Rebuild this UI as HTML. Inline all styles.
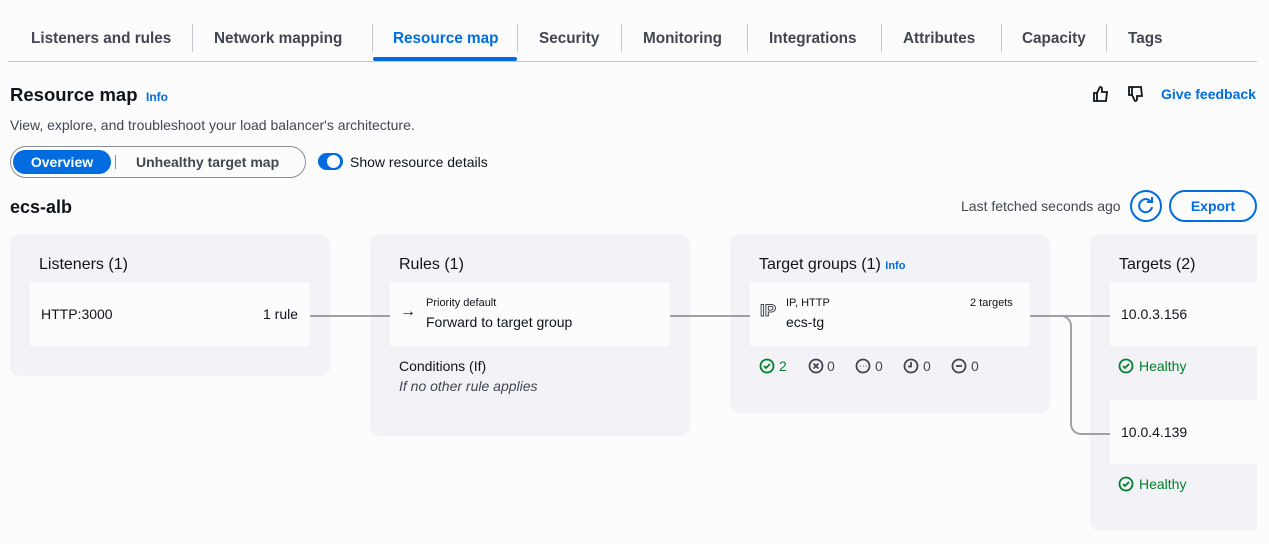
<!DOCTYPE html><html><head><style>
*{margin:0;padding:0;box-sizing:border-box}
body{width:1269px;height:544px;background:#fcfcfd;font-family:"Liberation Sans",sans-serif;color:#0f141a;position:relative;overflow:hidden;font-size:14px}
.a{position:absolute;white-space:nowrap}
.tab{position:absolute;top:30px;font-size:15.3px;font-weight:bold;color:#424650}
.sep{position:absolute;top:24px;width:1px;height:28px;background:#c6c6cd}
.card{position:absolute;background:#f3f3f7;border-radius:10px}
.in{position:absolute;background:#fcfcfd}
.h{font-size:16px}
.blue{color:#006ce0}
.ln{position:absolute;background:#a0a0a8;height:2px}
.g{color:#00802f}
</style></head><body>
<div class="tab" style="left:31px">Listeners and rules</div>
<div class="sep" style="left:192px"></div>
<div class="tab" style="left:214px">Network mapping</div>
<div class="sep" style="left:372px"></div>
<div class="tab" style="left:393px;color:#006ce0">Resource map</div>
<div class="sep" style="left:517px"></div>
<div class="tab" style="left:539px">Security</div>
<div class="sep" style="left:621px"></div>
<div class="tab" style="left:643px">Monitoring</div>
<div class="sep" style="left:747px"></div>
<div class="tab" style="left:769px">Integrations</div>
<div class="sep" style="left:881px"></div>
<div class="tab" style="left:903px">Attributes</div>
<div class="sep" style="left:1001px"></div>
<div class="tab" style="left:1022px">Capacity</div>
<div class="sep" style="left:1106px"></div>
<div class="tab" style="left:1128px">Tags</div>
<div class="a" style="left:8px;top:61px;width:1249px;height:1px;background:#c6c6cd"></div>
<div class="a" style="left:373px;top:57px;width:144px;height:4px;background:#006ce0;border-radius:2px"></div>

<div class="a" style="left:10px;top:84px;font-size:18.5px;font-weight:bold">Resource map</div>
<div class="a blue" style="left:146px;top:90px;font-size:12px;font-weight:bold">Info</div>
<div class="a" style="left:10px;top:117px;font-size:14px;color:#424650">View, explore, and troubleshoot your load balancer's architecture.</div>
<svg class="a" style="left:1092px;top:86px" width="18" height="16" viewBox="0 0 18 16" fill="none" stroke="#0f141a" stroke-width="1.8"><path d="M2 7h3v8H2zM5 7l3-6c2 0 2 1 2 3v2h5l-1 9H5"/></svg>
<svg class="a" style="left:1127px;top:86px" width="18" height="16" viewBox="0 0 18 16" fill="none" stroke="#0f141a" stroke-width="1.8"><path d="M2 1h3v8H2zM5 9l3 6c2 0 2-1 2-3v-2h5l-1-9H5"/></svg>
<div class="a blue" style="left:1161px;top:86px;font-weight:bold">Give feedback</div>

<div class="a" style="left:10px;top:146px;width:296px;height:32px;border:1px solid #8c8c94;border-radius:16px"></div>
<div class="a" style="left:13px;top:150px;width:98px;height:24px;background:#006ce0;border-radius:12px;color:#fff;font-weight:bold;text-align:center;line-height:24px">Overview</div>
<div class="a" style="left:115px;top:155px;width:1px;height:14px;background:#8c8c94"></div>
<div class="a" style="left:136px;top:154px;font-weight:bold;color:#424650">Unhealthy target map</div>
<div class="a" style="left:318px;top:153px;width:25px;height:17px;border-radius:9px;background:#006ce0"></div>
<div class="a" style="left:327px;top:155px;width:13px;height:13px;border-radius:50%;background:#fff"></div>
<div class="a" style="left:350px;top:154px">Show resource details</div>

<div class="a" style="left:10px;top:197px;font-size:18px;font-weight:bold">ecs-alb</div>
<div class="a" style="left:961px;top:198px;color:#424650">Last fetched seconds ago</div>
<div class="a" style="left:1130px;top:190px;width:32px;height:32px;border:2px solid #006ce0;border-radius:50%"></div>
<svg class="a" style="left:1136px;top:196px" width="20" height="20" viewBox="0 0 20 20" fill="none" stroke="#006ce0" stroke-width="2"><path d="M15 6A6.5 6.5 0 1 0 16 11"/><path d="M11 6h5V1"/></svg>
<div class="a" style="left:1169px;top:190px;width:88px;height:32px;border:2px solid #006ce0;border-radius:16px;color:#006ce0;font-weight:bold;text-align:center;line-height:28px">Export</div>

<div class="card" style="left:10px;top:234px;width:320px;height:142px"></div>
<div class="a h" style="left:39px;top:256px">Listeners (1)</div>
<div class="in" style="left:30px;top:282px;width:280px;height:64px"></div>
<div class="a" style="left:41px;top:306px">HTTP:3000</div>
<div class="a" style="left:263px;top:306px">1 rule</div>

<div class="card" style="left:370px;top:234px;width:320px;height:202px"></div>
<div class="a h" style="left:399px;top:256px">Rules (1)</div>
<div class="in" style="left:390px;top:282px;width:280px;height:64px"></div>
<div class="a" style="left:400px;top:303px;font-size:16px">→</div>
<div class="a" style="left:426px;top:297px;font-size:11px">Priority default</div>
<div class="a" style="left:426px;top:314px">Forward to target group</div>
<div class="a" style="left:399px;top:358px">Conditions (If)</div>
<div class="a" style="left:399px;top:378px;font-style:italic;color:#424650">If no other rule applies</div>

<div class="card" style="left:730px;top:234px;width:320px;height:179px"></div>
<div class="a h" style="left:759px;top:256px">Target groups (1) <span class="blue" style="font-size:11px;font-weight:bold">Info</span></div>
<div class="in" style="left:750px;top:282px;width:280px;height:64px"></div>
<div class="a" style="left:760px;top:301px;font-size:17px;color:#fff;-webkit-text-stroke:1px #424650;font-weight:bold">IP</div>
<div class="a" style="left:786px;top:297px;font-size:11px">IP, HTTP</div>
<div class="a" style="left:970px;top:297px;font-size:11px">2 targets</div>
<div class="a" style="left:786px;top:314px">ecs-tg</div>
<svg class="a" style="left:759px;top:358px" width="240" height="16" viewBox="0 0 240 16" fill="none" stroke-width="1.8">
<circle cx="8" cy="8" r="6.5" stroke="#00802f"/><path d="M5 8l2 2 4-4" stroke="#00802f"/>
<circle cx="57" cy="8" r="6.5" stroke="#424650"/><path d="M54.5 5.5l5 5M59.5 5.5l-5 5" stroke="#424650"/>
<circle cx="104" cy="8" r="6.5" stroke="#424650"/><path d="M101 8h.5M104 8h.5M107 8h.5" stroke="#424650"/>
<circle cx="152" cy="8" r="6.5" stroke="#424650"/><path d="M152 4v4.5h-3" stroke="#424650"/>
<circle cx="200" cy="8" r="6.5" stroke="#424650"/><path d="M197 8h6" stroke="#424650"/>
</svg>
<div class="a g" style="left:779px;top:358px">2</div>
<div class="a" style="left:827px;top:358px;color:#424650">0</div>
<div class="a" style="left:875px;top:358px;color:#424650">0</div>
<div class="a" style="left:923px;top:358px;color:#424650">0</div>
<div class="a" style="left:971px;top:358px;color:#424650">0</div>

<div class="card" style="left:1090px;top:234px;width:200px;height:297px"></div>
<div class="a h" style="left:1119px;top:256px">Targets (2)</div>
<div class="in" style="left:1110px;top:282px;width:160px;height:64px"></div>
<div class="a" style="left:1121px;top:306px">10.0.3.156</div>
<div class="in" style="left:1110px;top:400px;width:160px;height:64px"></div>
<div class="a" style="left:1121px;top:424px">10.0.4.139</div>
<svg class="a" style="left:1118px;top:358px" width="16" height="16" viewBox="0 0 16 16" fill="none" stroke="#00802f" stroke-width="1.8"><circle cx="8" cy="8" r="6.5"/><path d="M5 8l2 2 4-4"/></svg>
<div class="a g" style="left:1139px;top:358px">Healthy</div>
<svg class="a" style="left:1118px;top:476px" width="16" height="16" viewBox="0 0 16 16" fill="none" stroke="#00802f" stroke-width="1.8"><circle cx="8" cy="8" r="6.5"/><path d="M5 8l2 2 4-4"/></svg>
<div class="a g" style="left:1139px;top:476px">Healthy</div>
<div class="a" style="left:1257px;top:0;width:12px;height:544px;background:#fcfcfd"></div>

<div class="ln" style="left:310px;top:315px;width:80px"></div>
<div class="ln" style="left:670px;top:315px;width:80px"></div>
<svg class="a" style="left:1030px;top:314px" width="80" height="122" fill="none" stroke="#a0a0a8" stroke-width="2"><path d="M0 2H80M21 2h10a10 10 0 0 1 10 10v98a10 10 0 0 0 10 10h29"/></svg>
</body></html>
